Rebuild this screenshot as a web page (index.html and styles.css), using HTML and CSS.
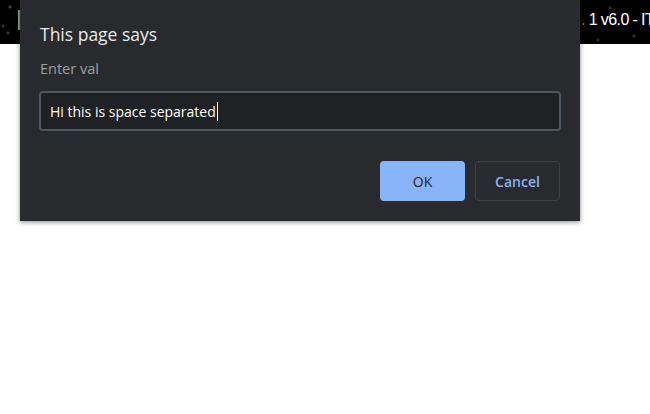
FILE: index.html
```html
<!DOCTYPE html>
<html>
<head>
<meta charset="utf-8">
<link rel="stylesheet" href="styles.css">
</head>
<body>
<div class="page">
  <header class="topband">
    <span class="edge"></span>
    <span class="tabtitle"><span class="dot-o">.</span> 1 v6.0 - IT</span>
  </header>
</div>
<div class="dialog" role="dialog">
  <h1 class="title">This page says</h1>
  <p class="msg">Enter val</p>
  <div class="field"><span class="value">Hi this is space separated</span><span class="caret"></span></div>
  <div class="actions">
    <button class="btn btn-ok">OK</button>
    <button class="btn btn-cancel">Cancel</button>
  </div>
</div>
</body>
</html>
```

FILE: styles.css
```css
html, body {
  margin: 0;
  padding: 0;
  background: #ffffff;
  width: 650px;
  height: 414px;
  overflow: hidden;
  font-family: "Open Sans", "Noto Sans", sans-serif;
}
.page {
  width: 650px;
}
.topband {
  height: 44px;
  background-color: #000;
  background-image:
    radial-gradient(circle at 10px 7px, #444 1px, transparent 2px),
    radial-gradient(circle at 3px 26px, #333 1px, transparent 2px),
    radial-gradient(circle at 8px 33px, #333 1px, transparent 2px),
    radial-gradient(circle at 610px 8px, #333 1px, transparent 2px),
    radial-gradient(circle at 634px 36px, #333 1px, transparent 2px),
    radial-gradient(circle at 598px 40px, #2a2a2a 1px, transparent 2px),
    radial-gradient(circle at 645px 14px, #333 1px, transparent 2px);
  display: flex;
  align-items: center;
  position: relative;
}
.edge {
  position: absolute;
  left: 18px;
  top: 10px;
  width: 2px;
  height: 20px;
  background: #9a9a9a;
}
.tabtitle {
  margin-left: 581px;
  margin-top: -4px;
  color: #fff;
  font-family: "Liberation Sans", Arial, sans-serif;
  font-size: 16px;
  letter-spacing: -0.6px;
  white-space: nowrap;
}
.dot-o { color: #b5651d; }
.dialog {
  position: absolute;
  left: 20px;
  top: 0;
  width: 560px;
  height: 221px;
  box-sizing: border-box;
  background: #292a2d;
  box-shadow: 0 1px 4px rgba(0,0,0,0.35), 0 2px 6px rgba(0,0,0,0.15);
  padding: 22px 20px 0 20px;
  color: #e8eaed;
}
.title {
  margin: 0;
  font-size: 17.5px;
  font-weight: 400;
  line-height: 24px;
  color: #e8eaed;
}
.msg {
  margin: 14px 0 0 0;
  font-size: 14.5px;
  line-height: 18px;
  color: #9aa0a6;
}
.field {
  margin: 13px -1px 0 -1px;
  height: 40px;
  box-sizing: border-box;
  border: 2px solid #4d5566;
  border-radius: 4px;
  background: #202124;
  display: flex;
  align-items: center;
  padding-left: 9px;
}
.value {
  font-size: 14px;
  color: #ffffff;
  white-space: pre;
}
.caret {
  width: 1px;
  height: 19px;
  background: #fff;
  margin-left: 1px;
}
.actions {
  display: flex;
  justify-content: flex-end;
  gap: 10px;
  margin-top: 30px;
}
.btn {
  height: 40px;
  width: 85px;
  border-radius: 4px;
  font-family: "Open Sans", "Noto Sans", sans-serif;
  font-size: 14px;
  cursor: pointer;
}
.btn-ok {
  background: #8ab4f8;
  border: none;
  color: #202124;
}
.btn-cancel {
  background: transparent;
  border: 1px solid #3c4043;
  color: #8ab4f8;
  font-weight: 600;
}
```
